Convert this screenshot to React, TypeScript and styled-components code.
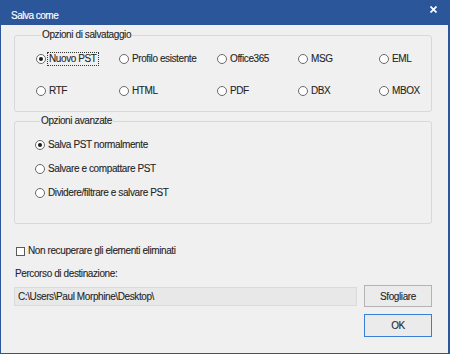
import React from 'react'
import styled, { createGlobalStyle, css } from 'styled-components'

const GlobalStyle = createGlobalStyle`
  html, body {
    margin: 0;
    padding: 0;
    background: #ffffff;
  }
  body {
    font-family: "Liberation Sans", Arial, sans-serif;
  }
`

const saveFormats = [
  ['Nuovo PST', 'Profilo esistente', 'Office365', 'MSG', 'EML'],
  ['RTF', 'HTML', 'PDF', 'DBX', 'MBOX'],
]

const advancedOptions = [
  'Salva PST normalmente',
  'Salvare e compattare PST',
  'Dividere/filtrare e salvare PST',
]

const App: React.FC = () => {
  return (
    <>
      <GlobalStyle />
      <Window>
        <TitleBar>
          <Title>Salva come</Title>
          <CloseIcon width="7" height="7" viewBox="0 0 7 7">
            <path d="M0.5 0.5 L6.5 6.5 M6.5 0.5 L0.5 6.5" stroke="#ffffff" strokeWidth="1.7" />
          </CloseIcon>
        </TitleBar>
        <Body>
          <GroupBox $padding="9px 0 12px 21px">
            <Legend>Opzioni di salvataggio</Legend>
            <FormatGrid>
              {saveFormats.flat().map((label, i) => (
                <Option key={label}>
                  <Radio $checked={i === 0} />
                  <OptionLabel $focused={i === 0}>{label}</OptionLabel>
                </Option>
              ))}
            </FormatGrid>
          </GroupBox>

          <GroupBox $padding="9px 0 22px 20px" $spaced>
            <Legend>Opzioni avanzate</Legend>
            <OptionList>
              {advancedOptions.map((label, i) => (
                <Option key={label}>
                  <Radio $checked={i === 0} />
                  <OptionLabel>{label}</OptionLabel>
                </Option>
              ))}
            </OptionList>
          </GroupBox>

          <CheckRow>
            <Checkbox />
            <OptionLabel>Non recuperare gli elementi eliminati</OptionLabel>
          </CheckRow>

          <FieldLabel>Percorso di destinazione:</FieldLabel>

          <PathGrid>
            <PathInput>C:\Users\Paul Morphine\Desktop\</PathInput>
            <Button>Sfogliare</Button>
            <span />
            <Button $primary>OK</Button>
          </PathGrid>
        </Body>
      </Window>
    </>
  )
}
export default App

const Window = styled.div`
  width: 450px;
  height: 354px;
  box-sizing: border-box;
  border: 1px solid #2b579a;
  border-top: 0;
  border-right-width: 2px;
  background: #f0f0f0;
  display: flex;
  flex-direction: column;
  font-size: 10px;
  letter-spacing: -0.4px;
  color: #262626;
  -webkit-text-stroke: 0.1px #262626;
  overflow: hidden;
`

const TitleBar = styled.div`
  height: 25px;
  flex: 0 0 25px;
  background: #2b579a;
  display: flex;
  align-items: flex-start;
  justify-content: space-between;
  padding: 0 11px 0 10px;
`

const Title = styled.div`
  color: #ffffff;
  -webkit-text-stroke: 0.15px #ffffff;
  font-size: 10px;
  letter-spacing: -0.5px;
  line-height: 14px;
  padding-top: 9px;
`

const CloseIcon = styled.svg`
  margin-top: 6px;
  display: block;
`

const Body = styled.div`
  display: flex;
  flex-direction: column;
  padding: 3px 16px 0 13px;
`

const GroupBox = styled.fieldset<{ $padding: string; $spaced?: boolean }>`
  margin: 0;
  min-width: 0;
  padding: ${({ $padding }) => $padding};
  border: 1px solid #d8d8d8;
  border-radius: 3px;

  ${({ $spaced }) => $spaced && css`
    margin-top: 2px;
  `}
`

const Legend = styled.legend`
  margin-left: 5px;
  padding: 0 1px;
  line-height: 14px;
`

const FormatGrid = styled.div`
  display: grid;
  grid-template-columns: 83px 98px 81px 81px 1fr;
  grid-auto-rows: 16px;
  row-gap: 16px;
`

const OptionList = styled.div`
  display: grid;
  grid-auto-rows: 16px;
  row-gap: 8px;
`

const Option = styled.div`
  display: flex;
  align-items: center;
  white-space: nowrap;
`

const Radio = styled.span<{ $checked?: boolean }>`
  box-sizing: border-box;
  width: 10px;
  height: 10px;
  border: 1px solid #6a6a6a;
  border-radius: 50%;
  background: #ffffff;
  flex: 0 0 auto;
  display: flex;
  align-items: center;
  justify-content: center;

  &::after {
    content: '';
    width: 4px;
    height: 4px;
    border-radius: 50%;
    background: ${({ $checked }) => $checked ? '#1a1a1a' : 'transparent'};
  }
`

const OptionLabel = styled.span<{ $focused?: boolean }>`
  margin-left: 2px;
  line-height: 12px;
  padding: 0 1px;

  ${({ $focused }) => $focused && css`
    outline: 1px dotted #333333;
    outline-offset: 0;
  `}
`

const CheckRow = styled.div`
  display: flex;
  align-items: center;
  height: 14px;
  margin-top: 20px;
  padding-left: 2px;
`

const Checkbox = styled.span`
  box-sizing: border-box;
  width: 9px;
  height: 9px;
  border: 1px solid #5a5a5a;
  background: #ffffff;
  flex: 0 0 auto;
`

const FieldLabel = styled.div`
  margin-top: 9px;
  padding-left: 1px;
  line-height: 14px;
`

const PathGrid = styled.div`
  margin-top: 4px;
  display: grid;
  grid-template-columns: 1fr 68px;
  grid-template-rows: 22px 23px;
  column-gap: 7px;
  row-gap: 7px;
`

const PathInput = styled.div`
  align-self: center;
  box-sizing: border-box;
  height: 19px;
  line-height: 17px;
  padding: 0 3px;
  border: 1px solid #dadada;
  background: #e8e8e8;
  white-space: nowrap;
  overflow: hidden;
`

const Button = styled.div<{ $primary?: boolean }>`
  box-sizing: border-box;
  display: flex;
  align-items: center;
  justify-content: center;
  border: 1px solid ${({ $primary }) => $primary ? '#3a7fd5' : '#b4b4b4'};
  background: #ebebeb;
`
